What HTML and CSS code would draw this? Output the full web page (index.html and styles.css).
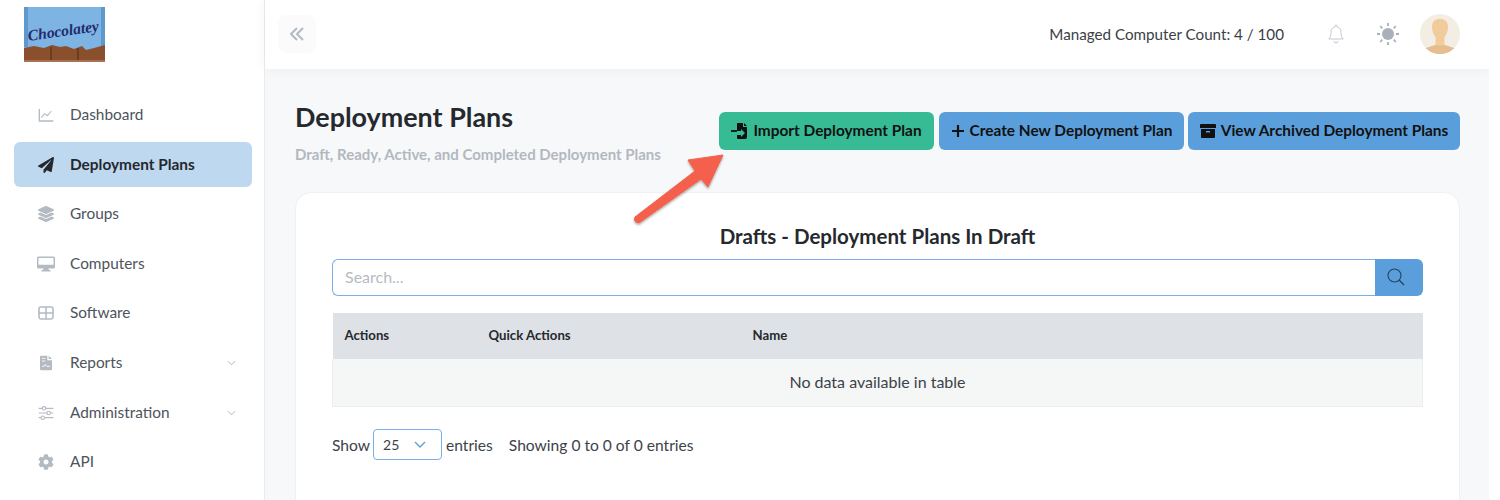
FILE: index.html
```html
<!DOCTYPE html>
<html lang="en">
<head>
    <meta charset="UTF-8">
    <meta name="viewport" content="width=device-width, initial-scale=1.0">
    <title>Deployment Plans</title>
    <link rel="stylesheet" href="styles.css">
</head>
<body>
    <div class="app">
        <aside class="sidebar">
            <div class="logo">
                <svg width="81" height="55" viewBox="0 0 81 55">
                    <rect width="81" height="55" fill="#7db4e4"/>
                    <rect width="4" height="40" fill="#5f98cc"/>
                    <rect x="77" width="4" height="40" fill="#5f98cc"/>
                    <path d="M0 41 L10 39 L20 41 L28 38 L36 40 L42 39 L50 42 L58 39 L62 43 L70 41 L81 38 V55 H0Z" fill="#8a4f2d"/>
                    <path d="M0 53 H81 V55 H0Z" fill="#a8714f"/>
                    <path d="M27 40 V53 M54 41 V53" stroke="#5d3218" stroke-width="1.2"/>
                    <text x="40" y="29" class="logo-text" text-anchor="middle" transform="rotate(-8 40 29)">Chocolatey</text>
                </svg>
            </div>
            <nav class="nav">
                <a class="nav-item">
                    <svg class="nav-icon" viewBox="0 0 24 24"><path d="M2 3v18h21" fill="none" stroke="currentColor" stroke-width="2"/><path d="M5 16l5-6 4 3 6-7" fill="none" stroke="currentColor" stroke-width="1.6"/></svg>
                    <span>Dashboard</span>
                </a>
                <a class="nav-item active">
                    <svg class="nav-icon" viewBox="0 0 512 512"><path d="M476 3.2L12.5 270.6c-18.1 10.4-15.8 35.6 2.2 43.2L121 358.4l287.3-253.2c5.5-4.9 13.3 2.6 8.6 8.3L176 407v80.5c0 23.6 28.5 32.9 42.5 15.8L282 426l124.6 52.2c14.2 6 30.4-2.9 33-18.2l72-432C515 7.8 493.3-6.8 476 3.2z" fill="currentColor"/></svg>
                    <span>Deployment Plans</span>
                </a>
                <a class="nav-item">
                    <svg class="nav-icon" viewBox="0 0 512 512"><path d="M12.41 148.02l232.94 105.67c6.8 3.09 14.49 3.09 21.29 0l232.94-105.67c16.55-7.51 16.55-32.52 0-40.03L266.65 2.31a25.607 25.607 0 0 0-21.29 0L12.41 107.98c-16.55 7.51-16.55 32.53 0 40.04zm487.18 88.28l-58.09-26.33-161.64 73.27c-7.56 3.43-15.59 5.17-23.86 5.17s-16.29-1.74-23.86-5.17L70.51 209.97l-58.1 26.33c-16.55 7.5-16.55 32.5 0 40l232.94 105.59c6.8 3.08 14.49 3.08 21.29 0L499.59 276.3c16.55-7.5 16.55-32.5 0-40zm0 127.8l-57.87-26.23-161.86 73.37c-7.56 3.43-15.59 5.17-23.86 5.17s-16.29-1.74-23.86-5.17L70.29 337.87 12.41 364.1c-16.55 7.5-16.55 32.5 0 40l232.94 105.59c6.8 3.08 14.49 3.08 21.29 0L499.59 404.1c16.55-7.5 16.55-32.5 0-40z" fill="currentColor"/></svg>
                    <span>Groups</span>
                </a>
                <a class="nav-item">
                    <svg class="nav-icon wide" viewBox="0 0 24 20"><path d="M2 0h20a2 2 0 0 1 2 2v12a2 2 0 0 1-2 2h-7l1 2h2v2H6v-2h2l1-2H2a2 2 0 0 1-2-2V2a2 2 0 0 1 2-2zm0 2v9h20V2z" fill="currentColor"/></svg>
                    <span>Computers</span>
                </a>
                <a class="nav-item">
                    <svg class="nav-icon" viewBox="0 0 24 24"><rect x="1.5" y="3" width="21" height="18" rx="2.5" fill="none" stroke="currentColor" stroke-width="2.4"/><path d="M12 3v18M1.5 12h21" stroke="currentColor" stroke-width="2.2"/></svg>
                    <span>Software</span>
                </a>
                <a class="nav-item">
                    <svg class="nav-icon" viewBox="0 0 24 24"><path d="M5 1h9v7h7v13a2 2 0 0 1-2 2H5a2 2 0 0 1-2-2V3a2 2 0 0 1 2-2zM16 1l5 5h-5z" fill="currentColor"/><path d="M6 17h3l2-3 2 3h5M6 5h5M6 9h5" fill="none" stroke="#fff" stroke-width="1.3"/></svg>
                    <span>Reports</span>
                    <svg class="nav-caret" viewBox="0 0 10 6"><path d="M1 1l4 4 4-4" fill="none" stroke="currentColor" stroke-width="1"/></svg>
                </a>
                <a class="nav-item">
                    <svg class="nav-icon" viewBox="0 0 24 24"><path d="M1 5h22M1 12h22M1 19h22" stroke="currentColor" stroke-width="1.8"/><circle cx="9" cy="5" r="2.6" fill="#fff" stroke="currentColor" stroke-width="1.6"/><circle cx="16" cy="12" r="2.6" fill="#fff" stroke="currentColor" stroke-width="1.6"/><circle cx="7" cy="19" r="2.6" fill="#fff" stroke="currentColor" stroke-width="1.6"/></svg>
                    <span>Administration</span>
                    <svg class="nav-caret" viewBox="0 0 10 6"><path d="M1 1l4 4 4-4" fill="none" stroke="currentColor" stroke-width="1"/></svg>
                </a>
                <a class="nav-item">
                    <svg class="nav-icon" viewBox="0 0 512 512"><path d="M487.4 315.7l-42.6-24.6c4.3-23.2 4.3-47 0-70.2l42.6-24.6c4.9-2.8 7.1-8.6 5.5-14-11.1-35.6-30-67.8-54.7-94.6-3.8-4.1-10-5.1-14.8-2.3L380.8 110c-17.9-15.4-38.5-27.3-60.8-35.1V25.8c0-5.6-3.9-10.5-9.4-11.7-36.7-8.2-74.3-7.8-109.2 0-5.5 1.2-9.4 6.1-9.4 11.7V75c-22.2 7.9-42.8 19.8-60.8 35.1L88.7 85.5c-4.9-2.8-11-1.9-14.8 2.3-24.7 26.7-43.6 58.9-54.7 94.6-1.7 5.4.6 11.2 5.5 14L67.3 221c-4.3 23.2-4.3 47 0 70.2l-42.6 24.6c-4.9 2.8-7.1 8.6-5.5 14 11.1 35.6 30 67.8 54.7 94.6 3.8 4.1 10 5.1 14.8 2.3l42.6-24.6c17.9 15.4 38.5 27.3 60.8 35.1v49.2c0 5.6 3.9 10.5 9.4 11.7 36.7 8.2 74.3 7.8 109.2 0 5.5-1.2 9.4-6.1 9.4-11.7v-49.2c22.2-7.9 42.8-19.8 60.8-35.1l42.6 24.6c4.9 2.8 11 1.9 14.8-2.3 24.7-26.7 43.6-58.9 54.7-94.6 1.5-5.5-.7-11.3-5.6-14.1zM256 336c-44.1 0-80-35.9-80-80s35.9-80 80-80 80 35.9 80 80-35.9 80-80 80z" fill="currentColor"/></svg>
                    <span>API</span>
                </a>
            </nav>
        </aside>

        <div class="main">
            <header class="topbar">
                <button class="collapse-btn" type="button">
                    <svg width="14" height="14" viewBox="0 0 14 14"><path d="M7 1L1 7l6 6M13 1L7 7l6 6" fill="none" stroke="currentColor" stroke-width="2"/></svg>
                </button>
                <div class="topbar-right">
                    <span class="count">Managed Computer Count: 4 / 100</span>
                    <svg class="bell" width="16" height="20" viewBox="0 0 16 20"><path d="M8 1a1 1 0 0 1 1 1v1c2.6.5 4 2.6 4 5.2 0 3.4.6 5 2.3 6.800H.7C2.400 13.200 3 11.600 3 8.200 3 5.600 4.400 3.500 7 3V2a1 1 0 0 1 1-1zM6 17a2 2 0 0 0 4 0" fill="none" stroke="currentColor" stroke-width="1"/></svg>
                    <svg class="sun" width="24" height="24" viewBox="0 0 24 24">
                        <circle cx="12" cy="12" r="6" fill="currentColor"/>
                        <path d="M12 1v3M12 20v3M1 12h3M20 12h3M4.200 4.200l2.100 2.100M17.700 17.700l2.100 2.100M4.200 19.800l2.100-2.100M17.700 6.300l2.100-2.100" stroke="currentColor" stroke-width="1.8"/>
                    </svg>
                    <svg class="avatar" width="40" height="40" viewBox="0 0 40 40">
                        <clipPath id="avatarClip"><circle cx="20" cy="20" r="20"/></clipPath>
                        <g clip-path="url(#avatarClip)">
                            <rect width="40" height="40" fill="#f3ede4"/>
                            <path d="M0 40 V36 L15 31 H25 L40 36 V40Z" fill="#e6bd8e"/>
                            <path d="M12 13c0-6 3.500-8 8-8s8 2 8 8c0 5-2 8-3.500 10v7c0 2-9 2-9 0v-7C14 21 12 18 12 13z" fill="#f1cc9b"/>
                        </g>
                    </svg>
                </div>
            </header>

            <section class="content">
                <div class="page-head">
                    <div class="page-title">
                        <h1>Deployment Plans</h1>
                        <p>Draft, Ready, Active, and Completed Deployment Plans</p>
                    </div>
                    <div class="actions">
                        <a class="btn btn-green">
                            <svg width="17" height="16" viewBox="0 0 17 16"><path d="M6 0h6v4h4v10a2 2 0 0 1-2 2H7a1 1 0 0 1-1-1v-3h4v2l4-4-4-4v2H6V1zM13 0l3 3h-3z" fill="currentColor"/><path d="M0 8h6" stroke="currentColor" stroke-width="1.800"/></svg>
                            <span>Import Deployment Plan</span>
                        </a>
                        <a class="btn btn-create">
                            <svg width="14" height="14" viewBox="0 0 14 14"><path d="M7 1v12M1 7h12" stroke="currentColor" stroke-width="2.200"/></svg>
                            <span>Create New Deployment Plan</span>
                        </a>
                        <a class="btn btn-archive">
                            <svg width="16" height="14" viewBox="0 0 16 14"><path d="M1 0h14a1 1 0 0 1 1 1v3H0V1a1 1 0 0 1 1-1zM1 5h14v8a1 1 0 0 1-1 1H2a1 1 0 0 1-1-1zm5 2v1.500h4V7z" fill="currentColor" fill-rule="evenodd"/></svg>
                            <span>View Archived Deployment Plans</span>
                        </a>
                    </div>
                </div>

                <div class="card">
                    <h2>Drafts - Deployment Plans In Draft</h2>
                    <div class="search">
                        <input class="search-input" type="text" placeholder="Search...">
                        <button class="search-btn" type="button">
                            <svg width="18" height="18" viewBox="0 0 18 18"><circle cx="7.500" cy="7.500" r="6.500" fill="none" stroke="currentColor" stroke-width="1.100"/><path d="M12.300 12.300L17 17" stroke="currentColor" stroke-width="1.300"/></svg>
                        </button>
                    </div>
                    <table class="table">
                        <thead>
                            <tr>
                                <th class="col-actions">Actions</th>
                                <th class="col-quick">Quick Actions</th>
                                <th>Name</th>
                            </tr>
                        </thead>
                        <tbody>
                            <tr><td colspan="3">No data available in table</td></tr>
                        </tbody>
                    </table>
                    <div class="table-foot">
                        <span>Show</span>
                        <div class="select">
                            <span>25</span>
                            <svg width="12" height="7" viewBox="0 0 12 7"><path d="M1 1l5 5 5-5" fill="none" stroke="currentColor" stroke-width="1.300"/></svg>
                        </div>
                        <span>entries</span>
                        <span class="info">Showing 0 to 0 of 0 entries</span>
                    </div>
                </div>

                <svg class="arrow" width="100" height="82" viewBox="0 0 100 82">
                    <defs>
                        <filter id="arrowShadow" x="-20%" y="-20%" width="140%" height="140%">
                            <feDropShadow dx="0" dy="1.500" stdDeviation="1.200" flood-color="#000" flood-opacity=".35"/>
                        </filter>
                    </defs>
                    <path d="M5 67L65 21L58 10L93 5L78 37L71 29L9 73Q3 72 5 67Z" fill="#f4604c" stroke="#f4604c" stroke-width="1" stroke-linejoin="round" filter="url(#arrowShadow)"/>
                </svg>
            </section>
        </div>
    </div>
</body>
</html>
```

FILE: styles.css
```css
* { box-sizing: border-box; }
html, body { height: 100%; }
body { margin: 0; background: #fff; font-family: "Lato", "Open Sans", sans-serif; font-size: 15.4px; color: #3c4249; overflow: hidden; }
a { text-decoration: none; color: inherit; }

.app { display: flex; width: 1489px; height: 500px; overflow: hidden; }

/* sidebar */
.sidebar { width: 265px; flex-shrink: 0; background: #fff; border-right: 1px solid #e9ebee; padding: 7px 12px 0 14px; }
.logo { height: 85.500px; padding-left: 10px; }
.logo svg { display: block; }
.logo-text { font-family: "Liberation Serif", serif; font-style: italic; font-weight: 700; font-size: 15.5px; fill: #232a6b; }
.nav { display: flex; flex-direction: column; gap: 4.600px; }
.nav-item { display: flex; align-items: center; height: 45px; padding: 0 16px 0 24px; border-radius: 6px; color: #4e545c; }
.nav-item span { margin-left: 16px; padding-bottom: 2px; }
.nav-icon { width: 16px; height: 16px; color: #b4bac2; flex-shrink: 0; }
.nav-icon.wide { width: 18px; margin-left: -1px; margin-right: -1px; }
.nav-caret { width: 9px; height: 6px; margin-left: auto; color: #a9afb7; }
.nav-item.active { background: #bed8f0; color: #24282d; font-weight: 700; }
.nav-item.active .nav-icon { color: #24282d; }

/* top bar */
.main { flex: 1; min-width: 0; background: #f7f8fa; }
.topbar { display: flex; align-items: center; justify-content: space-between; height: 69px; background: #fff; padding: 0 29px 1px 13px; box-shadow: 0 1px 12px rgba(0, 0, 0, .05); position: relative; }
.collapse-btn { display: flex; align-items: center; justify-content: center; width: 38px; height: 38px; border: 0; border-radius: 8px; background: #fbfbfc; color: #b4bac2; }
.topbar-right { display: flex; align-items: center; }
.count { font-size: 15.2px; color: #3a4046; margin-right: 44px; padding-bottom: 1px; }
.bell { color: #c3c8ce; margin-right: 32px; }
.sun { color: #a9b0b9; margin-right: 20px; }

/* page */
.content { position: relative; padding: 34px 29px 0 30px; }
.page-head { display: flex; justify-content: space-between; align-items: flex-start; height: 89px; }
.page-title h1 { margin: -1px 0 0; font-size: 26.900px; line-height: 30px; font-weight: 700; color: #25292e; }
.page-title p { margin: 12px 0 0; font-size: 15px; line-height: 20px; font-weight: 700; color: #b3b8bf; }
.actions { display: flex; gap: 4px; margin-top: 9px; }
.btn { display: flex; align-items: center; justify-content: center; gap: 5px; height: 38px; border-radius: 6px; font-size: 15.4px; font-weight: 700; color: #111; }
.btn span { padding-bottom: 2px; }
.btn-green { width: 215px; margin-right: 1px; background: #36bb95; }
.btn-create { width: 245px; background: #5a9fdb; }
.btn-archive { width: 272px; background: #5a9fdb; }

.card { height: 400px; background: #fff; border: 1px solid #eef0f2; border-radius: 16px; padding: 29px 36px 0 36px; }
.card h2 { margin: 0 0 9px; font-size: 20.500px; line-height: 28px; font-weight: 700; text-align: center; color: #25292e; }
.search { display: flex; height: 37px; }
.search-input { flex: 1; border: 1px solid #7ab0e3; border-right: 0; border-radius: 6px 0 0 6px; padding: 0 12px 2px; font-family: inherit; font-size: 16px; color: #3c4249; outline: 0; }
.search-input::placeholder { color: #b6bbc2; }
.search-btn { display: flex; align-items: center; justify-content: center; width: 48px; padding: 0 6px 2px 0; border: 0; border-radius: 0 6px 6px 0; background: #5a9fdb; color: #24425f; }

.table { width: 100%; margin-top: 16.500px; border-collapse: collapse; table-layout: fixed; }
.table th { height: 46px; padding: 0 12px 2px; background: #dee1e5; text-align: left; font-size: 13.200px; font-weight: 700; color: #25292e; }
.table .col-actions { width: 144px; }
.table .col-quick { width: 264px; }
.table td { height: 48px; padding-bottom: 2px; background: #f5f6f6; border: 1px solid #eceeef; border-top: 0; text-align: center; font-size: 16px; color: #3c4249; }

.table-foot { display: flex; align-items: center; margin-top: 22px; color: #3c4249; font-size: 15.600px; }
.select { display: flex; align-items: center; justify-content: space-between; width: 69px; height: 31px; margin: 0 4px 0 3px; padding: 0 15px 0 9px; border: 1px solid #7ab0e3; border-radius: 4px; font-size: 14px; }
.select svg { color: #5a9fdb; }
.info { margin-left: 16px; }

/* callout over the page */
.arrow { position: absolute; left: 365px; top: 81px; }
```
